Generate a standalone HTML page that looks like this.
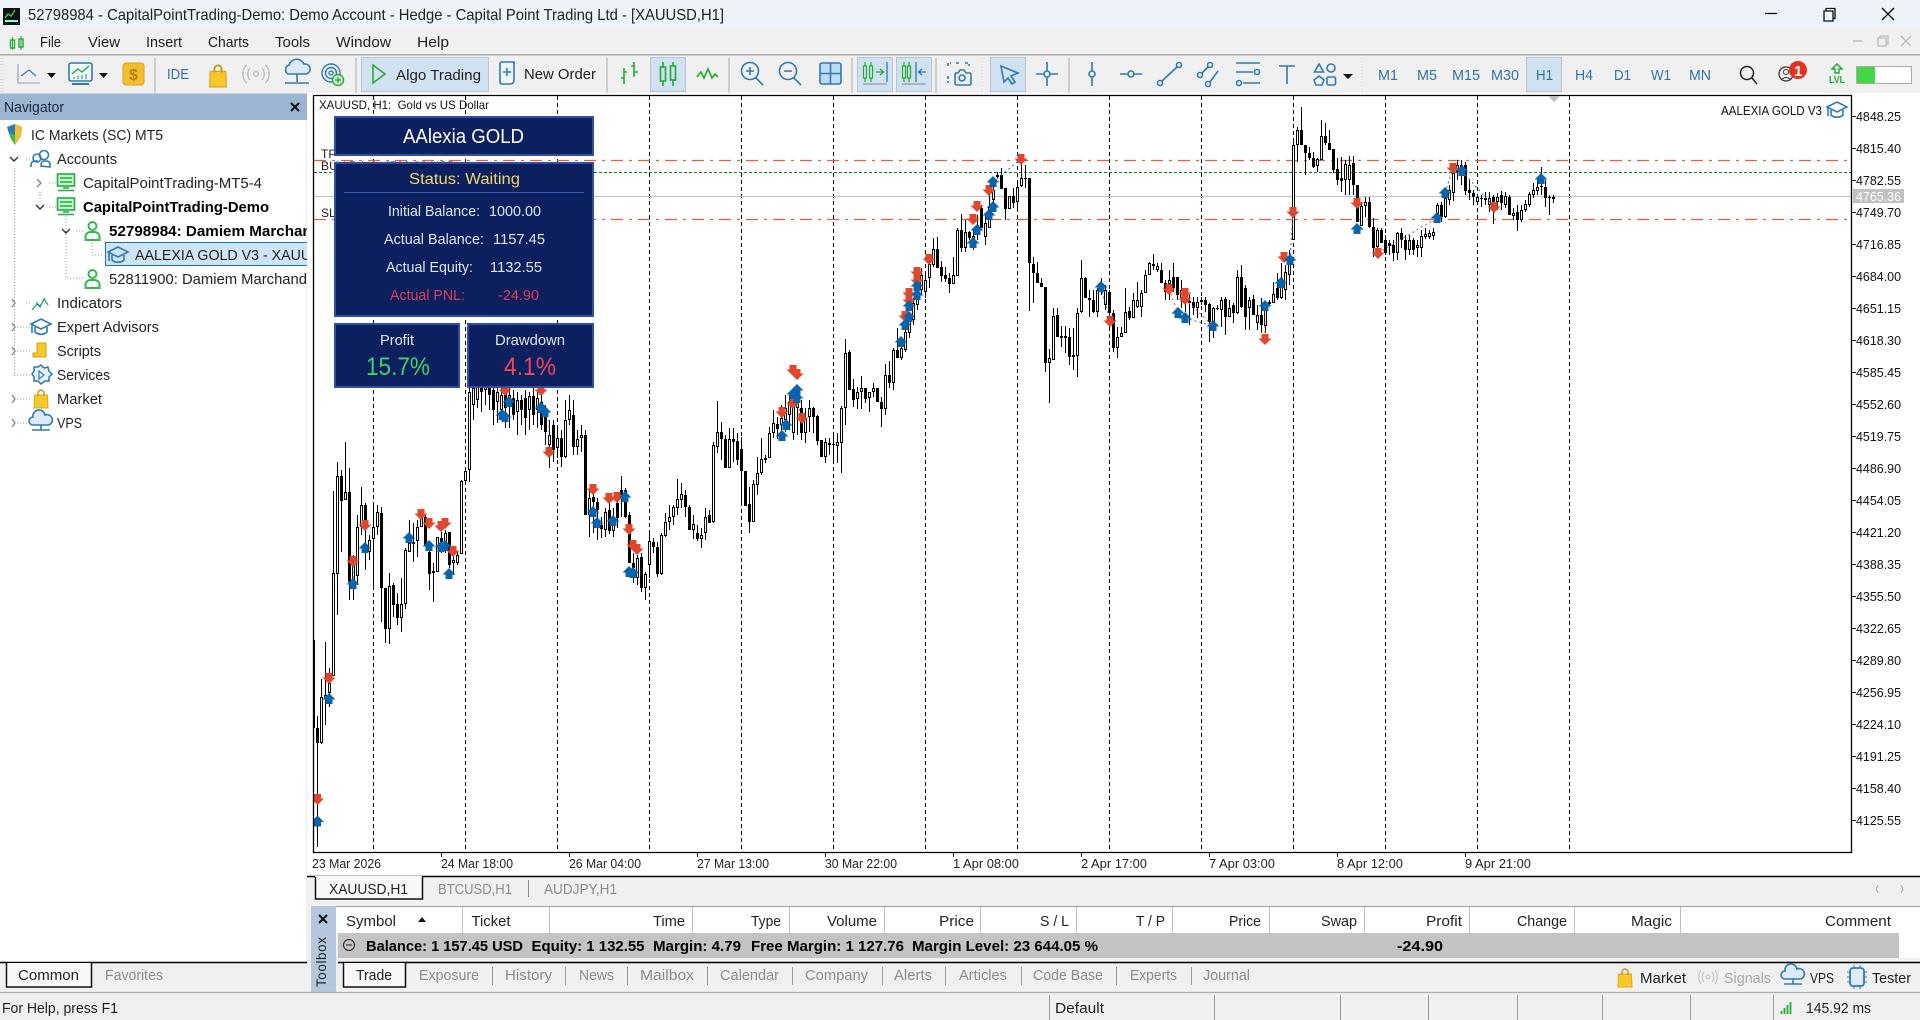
<!DOCTYPE html>
<html><head><meta charset="utf-8"><title>MT5</title>
<style>
html,body{margin:0;padding:0;width:1920px;height:1020px;overflow:hidden;background:#f0f0f0}
svg{display:block}
text{font-family:"Liberation Sans",sans-serif;font-size:15px;fill:#222}
.g{fill:#8c8c8c}.b{font-weight:bold;fill:#000}.a{font-size:13px;fill:#111}.d{font-size:12.5px;fill:#222}
.tf{fill:#2f74a8;font-size:15px}.h{fill:#222}
.w{fill:#dfe6f2;font-size:14.5px}
.ic{fill:none;stroke:#2f7bb0;stroke-width:1.6}.gr{fill:none;stroke:#22aa33;stroke-width:1.6}
</style></head><body>
<svg xmlns="http://www.w3.org/2000/svg" width="1920" height="1020" viewBox="0 0 1920 1020">
<defs>
<clipPath id="cc"><rect x="314" y="96" width="1537" height="756"/></clipPath>
<clipPath id="nv"><rect x="0" y="120" width="307" height="840"/></clipPath>
<g id="hat" class="ic"><path d="M-10-3 0-8 10-3 0 2Z"/><path d="M-6 0v5c3 3 9 3 12 0v-5M-9-2v8"/></g>
<g id="per" fill="none" stroke="#2dbb4d" stroke-width="2"><circle cx="0" cy="-5" r="4"/><path d="M-7 9v-3a5 5 0 0 1 5-5h4a5 5 0 0 1 5 5v3z"/></g>
<g id="srv"><rect x="-8.500" y="-9" width="17" height="12" fill="#c9f0cf" stroke="#1fae3f" stroke-width="1.600"/><path d="M-6-5h12M-6-1h12M-3 5h6M-8 7.500h16" stroke="#1fae3f" stroke-width="1.600" fill="none"/></g>
<g id="bag"><path d="M-6.500-4h13l.5 13h-14z" fill="#f7c828" stroke="#dba81c"/><path d="M-3-3v-3a3 3 0 0 1 6 0v3" fill="none" stroke="#c6951a" stroke-width="1.500"/></g>
<g id="cld" class="ic"><path d="M-8 2a4 4 0 0 1 0-8a6 6 0 0 1 12-2a5 5 0 0 1 4 10z" fill="#dcebf7"/><path d="M0 2v5M-9 7h18"/></g>
</defs>

<!-- backgrounds -->
<rect width="1920" height="1020" fill="#f0f0f0"/>
<rect width="1920" height="28" fill="#edf3f8"/>
<rect x="0" y="54" width="1920" height="1.5" fill="#a8a8a8"/>
<rect x="0" y="120" width="306" height="842" fill="#fff"/>
<rect x="0" y="93.5" width="307" height="26.5" fill="#9bb5d3"/>
<rect x="307" y="93" width="1613" height="783" fill="#fff"/>

<!-- title bar -->
<rect x="3" y="8" width="17" height="17" fill="#111"/><path d="M5 18l3-4 3 2 4-6" stroke="#3fbf4f" stroke-width="1.500" fill="none"/><rect x="5" y="20" width="13" height="2" fill="#8fd"/>
<text x="28" y="20" textLength="696" lengthAdjust="spacingAndGlyphs" style="font-size:16px">52798984 - CapitalPointTrading-Demo: Demo Account - Hedge - Capital Point Trading Ltd - [XAUUSD,H1]</text>
<path d="M1765 13.500h12" stroke="#111" stroke-width="1.300"/>
<path d="M1824 11h9v10h-9zM1826 11v-2.500h9v10h-2" fill="none" stroke="#111" stroke-width="1.300"/>
<path d="M1882 8l12 12M1894 8l-12 12" stroke="#111" stroke-width="1.300"/>

<!-- menu -->
<path d="M12.500 37v13M21 36v14" stroke="#22aa33"/><rect x="10.500" y="40" width="4" height="8" fill="none" stroke="#22aa33" stroke-width="1.400"/><rect x="19" y="39" width="4" height="8" fill="none" stroke="#22aa33" stroke-width="1.400"/>
<text x="40" y="47" textLength="21" lengthAdjust="spacingAndGlyphs">File</text>
<text x="88" y="47" textLength="32" lengthAdjust="spacingAndGlyphs">View</text>
<text x="146" y="47" textLength="36" lengthAdjust="spacingAndGlyphs">Insert</text>
<text x="208" y="47" textLength="41" lengthAdjust="spacingAndGlyphs">Charts</text>
<text x="275" y="47" textLength="35" lengthAdjust="spacingAndGlyphs">Tools</text>
<text x="336" y="47" textLength="55" lengthAdjust="spacingAndGlyphs">Window</text>
<text x="417" y="47" textLength="32" lengthAdjust="spacingAndGlyphs">Help</text>
<path d="M1853 41h9" stroke="#bbb" stroke-width="1.500"/><path d="M1878 38h8v8h-8zM1880 38v-2h8v8h-2" stroke="#bbb" fill="none" stroke-width="1.300"/><path d="M1901 36l10 10M1911 36l-10 10" stroke="#bbb" stroke-width="1.300"/>

<!-- toolbar -->
<path d="M3 58v34M1 58v34" stroke="#ccc" stroke-dasharray="1 2"/>
<path d="M18 64v19h22" stroke="#aab" fill="none" stroke-width="1.300"/><path d="M21 76l8-6 7 6" stroke="#3a86c0" fill="none" stroke-width="1.400"/>
<path d="M47 73h9l-4.500 5z" fill="#111"/>
<rect x="69" y="63" width="23" height="18" rx="2" fill="#eef6fb" stroke="#2f7bb0" stroke-width="1.600"/><path d="M72 74l6-5 4 3 7-6" stroke="#22aa33" fill="none" stroke-width="1.300"/><path d="M74 77v2M78 76v3M82 75v4M86 74v5" stroke="#2f7bb0"/><path d="M72 84h17" stroke="#2f7bb0" stroke-width="2"/>
<path d="M99 73h9l-4.500 5z" fill="#111"/>
<rect x="123" y="63" width="21" height="22" rx="3" fill="#f3bd2f" stroke="#dca41c"/><text x="129" y="80" style="font-size:16px;fill:#b57f10;font-weight:bold">$</text>
<path d="M155 58v35" stroke="#aaa"/>
<text x="167" y="79" textLength="22" lengthAdjust="spacingAndGlyphs" style="fill:#2f6fa8;font-size:15px">IDE</text>
<use href="#bag" x="217.500" y="76" transform="translate(-43 -15) scale(1.200)"/>
<g fill="none" stroke="#bbb" stroke-width="1.300"><circle cx="256" cy="74" r="2.500"/><path d="M250 68a9 9 0 0 0 0 12M262 68a9 9 0 0 1 0 12M246.500 65a13 13 0 0 0 0 18M265.500 65a13 13 0 0 1 0 18"/></g>
<path d="M288 74a5 5 0 0 1 1-9a8 8 0 0 1 15-1a5 5 0 0 1 2 10z" fill="#dcebf7" stroke="#2f7bb0" stroke-width="1.600"/><path d="M297 74v8M285 83h24" stroke="#2f7bb0" stroke-width="1.600"/>
<g fill="none" stroke="#2f7bb0" stroke-width="1.400"><circle cx="331" cy="73" r="9"/><circle cx="331" cy="73" r="5.500"/><circle cx="331" cy="73" r="2"/></g><circle cx="338" cy="80" r="5.500" fill="#d8f3dc" stroke="#22aa33" stroke-width="1.400"/><path d="M335 80h6M338 77v6" stroke="#22aa33" stroke-width="1.400"/>
<path d="M356 58v35" stroke="#aaa"/>
<rect x="361.500" y="57.500" width="127" height="34" fill="#d0e1f1" stroke="#b8c6d4"/>
<path d="M373 65l12 9-12 9z" fill="none" stroke="#22aa33" stroke-width="1.500"/>
<text x="396" y="80" textLength="85" lengthAdjust="spacingAndGlyphs">Algo Trading</text>
<path d="M500 64q0-2 2-2h12v18q0 4-4 4h-8q-2 0-2-2z" fill="#eef6fb" stroke="#2f7bb0" stroke-width="1.600"/><path d="M503 72h8M507 68v8" stroke="#2f7bb0" stroke-width="1.500"/>
<text x="524" y="79" textLength="72" lengthAdjust="spacingAndGlyphs">New Order</text>
<path d="M607 58v35" stroke="#aaa"/>
<path d="M624 68v16M621 78h3M624 72h3M634 62v15M631 66h3M634 72h4" stroke="#22aa33" stroke-width="1.600" fill="none"/>
<rect x="650.500" y="57.500" width="35" height="34" fill="#d0e1f1" stroke="#b8c6d4"/>
<g class="gr"><path d="M663 62v24M673 62v24"/><rect x="660.500" y="67" width="5" height="14" fill="#d0e1f1"/><rect x="670.500" y="66" width="5" height="14" fill="#d0e1f1"/></g>
<path d="M697 77l4-5 3 6 4-9 4 9 3-4 3 3" class="gr"/>
<path d="M729 58v35" stroke="#aaa"/>
<g class="ic"><circle cx="750" cy="71" r="8.500"/><path d="M756 78l7 7M746 71h8M750 67v8"/><circle cx="788" cy="71" r="8.500"/><path d="M794 78l7 7M784 71h8"/><rect x="820" y="63" width="21" height="21" rx="2" fill="#bcdcf3"/><path d="M830.500 63v21M820 73.500h21"/></g>
<path d="M852 58v35" stroke="#aaa"/>
<rect x="857.500" y="57.500" width="35" height="34" fill="#d0e1f1" stroke="#b8c6d4"/><rect x="896.500" y="57.500" width="35" height="34" fill="#d0e1f1" stroke="#b8c6d4"/>
<g fill="none" stroke="#22aa33" stroke-width="1.200"><path d="M865 62v20M871 62v20"/><rect x="863.500" y="66" width="3" height="12" fill="#d0e1f1"/><rect x="869.500" y="66" width="3" height="12" fill="#d0e1f1"/><path d="M876 72h7M880 69l3.500 3-3.500 3"/><path d="M904 62v20M909 62v20"/><rect x="902.500" y="66" width="3" height="12" fill="#d0e1f1"/><rect x="907.500" y="66" width="3" height="12" fill="#d0e1f1"/></g>
<path d="M887 62v20M916 62v20M926 72h-7M922 69l-3.500 3 3.500 3" fill="none" stroke="#2f7bb0" stroke-width="1.300"/>
<path d="M863 84h24M902 84h24" stroke="#999" stroke-width="1.200"/>
<path d="M936 58v35" stroke="#aaa"/>
<path d="M948 76v7M948 66v-3h3M956 63h4M965 63h4v3" class="ic" stroke-dasharray="3 2"/>
<path d="M955 73h3l2-3h4l2 3h3q2 0 2 2v8q0 2-2 2h-12q-2 0-2-2v-8q0-2 2-2z" class="ic"/><circle cx="962" cy="78" r="3" class="ic"/>
<path d="M982 58v35" stroke="#ccc" stroke-dasharray="1 2"/>
<rect x="990.500" y="57.500" width="35" height="34" fill="#d0e1f1" stroke="#b8c6d4"/>
<path d="M1001 66l17 7-7 3 4 6-3 2-4-6-4 4z" class="ic"/>
<g class="ic"><circle cx="1047" cy="74" r="3"/><path d="M1047 62v9M1047 77v9M1036 74h8M1050 74h8"/></g>
<path d="M1069 58v35" stroke="#aaa"/>
<g class="ic"><circle cx="1092" cy="74" r="3"/><path d="M1092 62v9M1092 77v9"/><circle cx="1131" cy="74" r="3"/><path d="M1120 74h8M1134 74h8"/><circle cx="1160" cy="83" r="2.500"/><circle cx="1179" cy="65" r="2.500"/><path d="M1162 81l15-14"/><circle cx="1200" cy="75" r="2.500"/><circle cx="1210" cy="65" r="2.500"/><circle cx="1208" cy="84" r="2.500"/><path d="M1202 73l6-6M1210 82l8-11"/><path d="M1236 63h24M1236 72h17M1243 83h17"/><circle cx="1257" cy="72" r="2.500"/><circle cx="1239" cy="83" r="2.500"/><path d="M1279 66h16M1287 66v18"/>
<path d="M1319 64l4.500 8h-9z"/><circle cx="1331" cy="68" r="4"/><path d="M1319 76l5 4-2 5h-6l-2-5z"/><rect x="1327" y="77" width="8.500" height="8" rx="1.500"/></g>
<path d="M1343 74h10l-5 5z" fill="#111"/>
<path d="M1362 58v35" stroke="#ccc" stroke-dasharray="1 2"/>
<text class="tf" x="1378" y="80" textLength="20" lengthAdjust="spacingAndGlyphs">M1</text>
<text class="tf" x="1417" y="80" textLength="20" lengthAdjust="spacingAndGlyphs">M5</text>
<text class="tf" x="1452" y="80" textLength="28" lengthAdjust="spacingAndGlyphs">M15</text>
<text class="tf" x="1491" y="80" textLength="28" lengthAdjust="spacingAndGlyphs">M30</text>
<rect x="1526.500" y="57.500" width="35" height="34" fill="#d0e1f1" stroke="#b8c6d4"/>
<text class="tf" x="1536" y="80" textLength="17" lengthAdjust="spacingAndGlyphs">H1</text>
<text class="tf" x="1575" y="80" textLength="18" lengthAdjust="spacingAndGlyphs">H4</text>
<text class="tf" x="1614" y="80" textLength="17" lengthAdjust="spacingAndGlyphs">D1</text>
<text class="tf" x="1651" y="80" textLength="20" lengthAdjust="spacingAndGlyphs">W1</text>
<text class="tf" x="1689" y="80" textLength="22" lengthAdjust="spacingAndGlyphs">MN</text>
<circle cx="1747" cy="73" r="6.500" fill="none" stroke="#222" stroke-width="1.500"/><path d="M1752 78l5 6" stroke="#222" stroke-width="1.500"/>
<circle cx="1786" cy="74" r="7" fill="none" stroke="#333" stroke-width="1.300"/><circle cx="1786" cy="72" r="2.500" fill="none" stroke="#333"/><path d="M1781 80q5-5 10 0" fill="none" stroke="#333"/>
<circle cx="1798" cy="70" r="9" fill="#e2311e"/><text x="1794" y="76" style="font-size:15px;fill:#fff;font-weight:bold">1</text>
<path d="M1837 64l5 5h-3v4h-4v-4h-3z" fill="none" stroke="#22aa33" stroke-width="1.400"/><text x="1829" y="83" textLength="16" lengthAdjust="spacingAndGlyphs" style="font-size:10px;fill:#22aa33;font-weight:bold">LVL</text>
<rect x="1856.500" y="66.500" width="55" height="17" fill="#fff" stroke="#aaa"/><rect x="1857" y="67" width="18" height="16" fill="#43d843"/>

<!-- navigator header -->
<text x="4" y="112" textLength="60" lengthAdjust="spacingAndGlyphs" style="fill:#1c2a3a">Navigator</text>
<path d="M291 103l8 8M299 103l-8 8" stroke="#111" stroke-width="2"/>

<!-- nav tree -->
<g stroke="#999" fill="none" stroke-dasharray="1 2">
<path d="M14.500 168v208M26 159h4M40 192v10M26 303h4M14 327h16M14 351h16M14 375h16M14 399h16M14 423h16M49 183h7M49 207h7M66 216v62h17M76 231h7M92 240v15h12"/>
</g>
<g fill="none" stroke="#333" stroke-width="1.400">
<path d="M10 157l4 4 4-4"/><path d="M37 179l4 4-4 4" stroke="#888"/><path d="M36 205l4 4 4-4"/><path d="M62 229l4 4 4-4"/>
<path d="M12 299l3 4-3 4M12 323l3 4-3 4M12 347l3 4-3 4M12 395l3 4-3 4M12 419l3 4-3 4" stroke="#888"/>
</g>
<path d="M7 127l8-3 7 3-1 9-6 9-5-8z" fill="#2f7bb0"/><path d="M15 124l7 3-1 9-6 9z" fill="#f3bd2f"/><path d="M10 133l5 2v10l-5-8z" fill="#3dbb4d"/>
<text x="31" y="140" textLength="132" lengthAdjust="spacingAndGlyphs">IC Markets (SC) MT5</text>
<g class="ic"><circle cx="44" cy="155" r="4.500"/><circle cx="37" cy="158" r="4"/><path d="M31 167v-2q0-4 5-4h2M41 166q0-5 3-5h2q4 0 4 4v2z"/></g>
<text x="57" y="164" textLength="60" lengthAdjust="spacingAndGlyphs">Accounts</text>
<use href="#srv" x="66" y="183"/><text x="83" y="188" textLength="179" lengthAdjust="spacingAndGlyphs">CapitalPointTrading-MT5-4</text>
<use href="#srv" x="66" y="207"/><text x="83" y="212" class="b" textLength="186" lengthAdjust="spacingAndGlyphs">CapitalPointTrading-Demo</text>
<use href="#per" x="92.500" y="231"/>
<g clip-path="url(#nv)">
<text x="109" y="236" class="b" textLength="212" lengthAdjust="spacingAndGlyphs">52798984: Damiem Marchand</text>
<rect x="105.500" y="242.500" width="210" height="23" fill="#cfe4f7" stroke="#1a73c0"/>
<text x="135" y="260" textLength="218" lengthAdjust="spacingAndGlyphs">AALEXIA GOLD V3 - XAUUSD,H1</text>
<text x="109" y="284" textLength="198" lengthAdjust="spacingAndGlyphs">52811900: Damiem Marchand</text>
</g>
<use href="#hat" x="118" y="255"/>
<use href="#per" x="92.500" y="279"/>
<path d="M32 310l5-6 3 3 4-8 4 6" fill="none" stroke="#2a8fc0" stroke-width="1.300"/><path d="M36 302l4 4 5-8" fill="none" stroke="#22aa33"/>
<text x="57" y="308" textLength="65" lengthAdjust="spacingAndGlyphs">Indicators</text>
<use href="#hat" x="41" y="327"/><text x="57" y="332" textLength="102" lengthAdjust="spacingAndGlyphs">Expert Advisors</text>
<path d="M37 343h9v14h-13v-4h4z" fill="#f7c828" stroke="#d49f1a"/><text x="57" y="356" textLength="44" lengthAdjust="spacingAndGlyphs">Scripts</text>
<path d="M41 365l3 3 4-1 1 4 3 3-3 3 0 4-4 0-4 3-3-3-4 0 0-4-2-3 2-3 0-4 4 0z" fill="#e4f0fa" stroke="#2f7bb0" stroke-width="1.500"/><path d="M39 371l5 4-5 4z" fill="none" stroke="#2f7bb0" stroke-width="1.200"/>
<text x="57" y="380" textLength="53" lengthAdjust="spacingAndGlyphs">Services</text>
<use href="#bag" x="41" y="399"/><text x="57" y="404" textLength="45" lengthAdjust="spacingAndGlyphs">Market</text>
<use href="#cld" x="41" y="423"/><text x="57" y="428" textLength="25" lengthAdjust="spacingAndGlyphs">VPS</text>

<!-- chart frame + grid -->
<g stroke="#000" stroke-dasharray="4 3">
<path d="M373.500 96V852M465.500 96V852M557.500 96V852M649.500 96V852M741.500 96V852M833.500 96V852M925.500 96V852M1017.500 96V852M1109.500 96V852M1201.500 96V852M1293.500 96V852M1385.500 96V852M1477.500 96V852M1569.500 96V852"/>
</g>
<path d="M314 196.500H1851" stroke="#c4c4c4" stroke-width="1.200"/>
<path d="M314 160.500H1851M314 219.500H1851" stroke="#e0613a" stroke-width="1.200" stroke-dasharray="12 6 3 6"/>
<path d="M314 172.500H1851" stroke="#187d18" stroke-dasharray="3 2"/>
<g id="cand" clip-path="url(#cc)"></g>
<g fill="none" stroke-dasharray="2 3" stroke="#1c6fb5" clip-path="url(#cc)"><path d="M993 182L1021 159M1101 287L1110 321M1445 193L1453 168M1462 171L1494 207M1290 260L1293 212M1185 318L1213 326M797 399L801 418M549 452L549 420M353 561V584"/><path stroke="#d8553a" d="M1185 299L1213 326M1378 253L1437 218M1265 306V339M1169 289L1178 313"/></g>
<path d="M313.500 95V852.500H1851.500V95M313 95.500H1852" fill="none" stroke="#000" stroke-width="1.300"/>
<path d="M1548 96h12l-6 6z" fill="#bdbdbd"/>
<text x="1721" y="115" class="a" textLength="101" lengthAdjust="spacingAndGlyphs" style="font-size:12.500px">AALEXIA GOLD V3</text>
<use href="#hat" x="1837" y="110"/>
<text x="319" y="109" textLength="170" lengthAdjust="spacingAndGlyphs" style="font-size:12px;fill:#111;white-space:pre">XAUUSD, H1:  Gold vs US Dollar</text>
<text x="321" y="158" style="font-size:12px">TP</text>
<text x="321" y="170" textLength="135" lengthAdjust="spacingAndGlyphs" style="font-size:12px;fill:#222">BUY Price: 4782.36 USD</text>
<text x="321" y="217" style="font-size:12px">SL</text>

<!-- price axis -->
<path d="M1851 116.500h5M1851 148.500h5M1851 180.500h5M1851 212.500h5M1851 244.500h5M1851 276.500h5M1851 308.500h5M1851 340.500h5M1851 372.500h5M1851 404.500h5M1851 436.500h5M1851 468.500h5M1851 500.500h5M1851 532.500h5M1851 564.500h5M1851 596.500h5M1851 628.500h5M1851 660.500h5M1851 692.500h5M1851 724.500h5M1851 756.500h5M1851 788.500h5M1851 820.500h5" stroke="#222"/>
<g class="a">
<text class="a" x="1856" y="121" textLength="45" lengthAdjust="spacingAndGlyphs">4848.25</text>
<text class="a" x="1856" y="153" textLength="45" lengthAdjust="spacingAndGlyphs">4815.40</text>
<text class="a" x="1856" y="185" textLength="45" lengthAdjust="spacingAndGlyphs">4782.55</text>
<text class="a" x="1856" y="217" textLength="45" lengthAdjust="spacingAndGlyphs">4749.70</text>
<text class="a" x="1856" y="249" textLength="45" lengthAdjust="spacingAndGlyphs">4716.85</text>
<text class="a" x="1856" y="281" textLength="45" lengthAdjust="spacingAndGlyphs">4684.00</text>
<text class="a" x="1856" y="313" textLength="45" lengthAdjust="spacingAndGlyphs">4651.15</text>
<text class="a" x="1856" y="345" textLength="45" lengthAdjust="spacingAndGlyphs">4618.30</text>
<text class="a" x="1856" y="377" textLength="45" lengthAdjust="spacingAndGlyphs">4585.45</text>
<text class="a" x="1856" y="409" textLength="45" lengthAdjust="spacingAndGlyphs">4552.60</text>
<text class="a" x="1856" y="441" textLength="45" lengthAdjust="spacingAndGlyphs">4519.75</text>
<text class="a" x="1856" y="473" textLength="45" lengthAdjust="spacingAndGlyphs">4486.90</text>
<text class="a" x="1856" y="505" textLength="45" lengthAdjust="spacingAndGlyphs">4454.05</text>
<text class="a" x="1856" y="537" textLength="45" lengthAdjust="spacingAndGlyphs">4421.20</text>
<text class="a" x="1856" y="569" textLength="45" lengthAdjust="spacingAndGlyphs">4388.35</text>
<text class="a" x="1856" y="601" textLength="45" lengthAdjust="spacingAndGlyphs">4355.50</text>
<text class="a" x="1856" y="633" textLength="45" lengthAdjust="spacingAndGlyphs">4322.65</text>
<text class="a" x="1856" y="665" textLength="45" lengthAdjust="spacingAndGlyphs">4289.80</text>
<text class="a" x="1856" y="697" textLength="45" lengthAdjust="spacingAndGlyphs">4256.95</text>
<text class="a" x="1856" y="729" textLength="45" lengthAdjust="spacingAndGlyphs">4224.10</text>
<text class="a" x="1856" y="761" textLength="45" lengthAdjust="spacingAndGlyphs">4191.25</text>
<text class="a" x="1856" y="793" textLength="45" lengthAdjust="spacingAndGlyphs">4158.40</text>
<text class="a" x="1856" y="825" textLength="45" lengthAdjust="spacingAndGlyphs">4125.55</text>
</g>
<rect x="1853" y="189" width="51" height="14" fill="#c2c2c2"/><text x="1856" y="201" textLength="45" lengthAdjust="spacingAndGlyphs" style="font-size:13px;fill:#fff">4765.36</text>

<!-- date axis -->
<path d="M441.500 852v5M569.500 852v5M697.500 852v5M825.500 852v5M953.500 852v5M1081.500 852v5M1209.500 852v5M1337.500 852v5M1465.500 852v5" stroke="#222"/>
<text class="d" x="312" y="868" textLength="69" lengthAdjust="spacingAndGlyphs">23 Mar 2026</text>
<text class="d" x="441" y="868" textLength="72" lengthAdjust="spacingAndGlyphs">24 Mar 18:00</text>
<text class="d" x="569" y="868" textLength="72" lengthAdjust="spacingAndGlyphs">26 Mar 04:00</text>
<text class="d" x="697" y="868" textLength="72" lengthAdjust="spacingAndGlyphs">27 Mar 13:00</text>
<text class="d" x="825" y="868" textLength="72" lengthAdjust="spacingAndGlyphs">30 Mar 22:00</text>
<text class="d" x="953" y="868" textLength="66" lengthAdjust="spacingAndGlyphs">1 Apr 08:00</text>
<text class="d" x="1081" y="868" textLength="66" lengthAdjust="spacingAndGlyphs">2 Apr 17:00</text>
<text class="d" x="1209" y="868" textLength="66" lengthAdjust="spacingAndGlyphs">7 Apr 03:00</text>
<text class="d" x="1337" y="868" textLength="66" lengthAdjust="spacingAndGlyphs">8 Apr 12:00</text>
<text class="d" x="1465" y="868" textLength="66" lengthAdjust="spacingAndGlyphs">9 Apr 21:00</text>

<!-- EA panels -->
<g stroke="#2f4fa5" stroke-width="2" fill="#0c1f5e">
<rect x="335" y="117" width="258" height="38"/>
<rect x="335" y="163" width="258" height="153"/>
<rect x="335" y="324" width="124" height="63"/>
<rect x="468" y="324" width="125" height="63"/>
</g>
<text x="403" y="143" textLength="121" lengthAdjust="spacingAndGlyphs" style="font-size:20px;fill:#fff">AAlexia GOLD</text>
<text x="409" y="184" textLength="111" lengthAdjust="spacingAndGlyphs" style="font-size:16px;fill:#f1d668">Status: Waiting</text>
<path d="M344 192.500H584" stroke="#3a5ab0"/>
<text class="w" x="388" y="216" textLength="92" lengthAdjust="spacingAndGlyphs">Initial Balance:</text><text class="w" x="489" y="216" textLength="52" lengthAdjust="spacingAndGlyphs">1000.00</text>
<text class="w" x="384" y="244" textLength="100" lengthAdjust="spacingAndGlyphs">Actual Balance:</text><text class="w" x="493" y="244" textLength="52" lengthAdjust="spacingAndGlyphs">1157.45</text>
<text class="w" x="386" y="272" textLength="87" lengthAdjust="spacingAndGlyphs">Actual Equity:</text><text class="w" x="490" y="272" textLength="52" lengthAdjust="spacingAndGlyphs">1132.55</text>
<text x="390" y="300" textLength="75" lengthAdjust="spacingAndGlyphs" style="font-size:14.500px;fill:#dd3f55">Actual PNL:</text><text x="498" y="300" textLength="41" lengthAdjust="spacingAndGlyphs" style="font-size:14.500px;fill:#dd3f55">-24.90</text>
<text class="w" x="380" y="345" textLength="34" lengthAdjust="spacingAndGlyphs">Profit</text>
<text class="w" x="495" y="345" textLength="70" lengthAdjust="spacingAndGlyphs">Drawdown</text>
<text x="366" y="375" textLength="64" lengthAdjust="spacingAndGlyphs" style="font-size:25px;fill:#43d163">15.7%</text>
<text x="504" y="375" textLength="52" lengthAdjust="spacingAndGlyphs" style="font-size:25px;fill:#f0465a">4.1%</text>

<!-- chart tabs -->
<rect x="307" y="877" width="1613" height="30" fill="#f0f0f0"/>
<path d="M307 876.500H1920" stroke="#000" stroke-width="1.500"/>
<rect x="315" y="876" width="107" height="23" fill="#f8f8f8"/>
<path d="M315.500 877v22h107v-22" fill="none" stroke="#111" stroke-width="1.500"/>
<text x="329" y="894" textLength="79" lengthAdjust="spacingAndGlyphs">XAUUSD,H1</text>
<text class="g" x="438" y="894" textLength="74" lengthAdjust="spacingAndGlyphs">BTCUSD,H1</text>
<path d="M528.500 880v17" stroke="#888"/>
<text class="g" x="544" y="894" textLength="73" lengthAdjust="spacingAndGlyphs">AUDJPY,H1</text>
<path d="M1878 885l-2 4 2 4M1901 885l2 4-2 4" fill="none" stroke="#aaa"/>

<!-- toolbox -->
<rect x="311" y="906" width="25" height="86" fill="#b4c7dd"/>
<path d="M319 915l8 8M327 915l-8 8" stroke="#111" stroke-width="2"/>
<text transform="translate(326 987) rotate(-90)" x="0" y="0" textLength="50" lengthAdjust="spacing" style="font-size:13.500px;fill:#222">Toolbox</text>
<path d="M336 906.500H1920" stroke="#a0a0a0"/>
<rect x="336" y="907" width="1584" height="26" fill="#fff"/>
<path d="M462.500 907v26M549.500 907v26M692.500 907v26M789.500 907v26M884.500 907v26M980.500 907v26M1076.500 907v26M1172.500 907v26M1269.500 907v26M1364.500 907v26M1469.500 907v26M1574.500 907v26M1680.500 907v26" stroke="#bdbdbd"/>
<rect x="338" y="933" width="1561" height="25" fill="#c3c3c3"/>
<rect x="1899" y="933" width="21" height="25" fill="#fff"/>
<text x="346" y="926" textLength="50" lengthAdjust="spacingAndGlyphs">Symbol</text><path d="M418 922h8l-4-5z" fill="#111"/>
<text x="471.500" y="926" textLength="39" lengthAdjust="spacingAndGlyphs">Ticket</text>
<g text-anchor="end">
<text x="685" y="926" text-anchor="end" textLength="32" lengthAdjust="spacingAndGlyphs">Time</text>
<text x="781" y="926" text-anchor="end" textLength="30" lengthAdjust="spacingAndGlyphs">Type</text>
<text x="877" y="926" text-anchor="end" textLength="50" lengthAdjust="spacingAndGlyphs">Volume</text>
<text x="974" y="926" text-anchor="end" textLength="35" lengthAdjust="spacingAndGlyphs">Price</text>
<text x="1069" y="926" text-anchor="end" textLength="29" lengthAdjust="spacingAndGlyphs">S / L</text>
<text x="1165" y="926" text-anchor="end" textLength="29" lengthAdjust="spacingAndGlyphs">T / P</text>
<text x="1261" y="926" text-anchor="end" textLength="32" lengthAdjust="spacingAndGlyphs">Price</text>
<text x="1357" y="926" text-anchor="end" textLength="36" lengthAdjust="spacingAndGlyphs">Swap</text>
<text x="1462" y="926" text-anchor="end" textLength="36" lengthAdjust="spacingAndGlyphs">Profit</text>
<text x="1567" y="926" text-anchor="end" textLength="50" lengthAdjust="spacingAndGlyphs">Change</text>
<text x="1672" y="926" text-anchor="end" textLength="41" lengthAdjust="spacingAndGlyphs">Magic</text>
<text x="1891" y="926" text-anchor="end" textLength="66" lengthAdjust="spacingAndGlyphs">Comment</text>
</g>
<circle cx="349" cy="945" r="5.500" fill="none" stroke="#222"/><path d="M346 945h6" stroke="#222"/>
<text class="b" x="366" y="951" textLength="157" lengthAdjust="spacingAndGlyphs">Balance: 1 157.45 USD</text>
<text class="b" x="531.500" y="951" textLength="113" lengthAdjust="spacingAndGlyphs">Equity: 1 132.55</text>
<text class="b" x="653" y="951" textLength="88" lengthAdjust="spacingAndGlyphs">Margin: 4.79</text>
<text class="b" x="751" y="951" textLength="153" lengthAdjust="spacingAndGlyphs">Free Margin: 1 127.76</text>
<text class="b" x="912" y="951" textLength="186" lengthAdjust="spacingAndGlyphs">Margin Level: 23 644.05 %</text>
<text class="b" x="1397" y="951" textLength="46" lengthAdjust="spacingAndGlyphs">-24.90</text>

<!-- bottom tabs -->
<path d="M0 962.500H307M338 962.500H1920" stroke="#000" stroke-width="1.500"/>
<rect x="6" y="963" width="86" height="24" fill="#f8f8f8"/><path d="M6.500 963v24h85v-24" fill="none" stroke="#111" stroke-width="1.500"/>
<text x="18" y="980" textLength="61" lengthAdjust="spacingAndGlyphs">Common</text>
<text class="g" x="105" y="980" textLength="58" lengthAdjust="spacingAndGlyphs">Favorites</text>
<rect x="343" y="963" width="63" height="24" fill="#f8f8f8"/><path d="M343.500 963v24h62v-24" fill="none" stroke="#111" stroke-width="1.500"/>
<text x="356" y="980" textLength="36" lengthAdjust="spacingAndGlyphs">Trade</text>
<text class="g" x="419" y="980" textLength="60" lengthAdjust="spacingAndGlyphs">Exposure</text>
<text class="g" x="505" y="980" textLength="47" lengthAdjust="spacingAndGlyphs">History</text>
<text class="g" x="579" y="980" textLength="35" lengthAdjust="spacingAndGlyphs">News</text>
<text class="g" x="640" y="980" textLength="54" lengthAdjust="spacingAndGlyphs">Mailbox</text>
<text class="g" x="720" y="980" textLength="59" lengthAdjust="spacingAndGlyphs">Calendar</text>
<text class="g" x="805" y="980" textLength="63" lengthAdjust="spacingAndGlyphs">Company</text>
<text class="g" x="894" y="980" textLength="38" lengthAdjust="spacingAndGlyphs">Alerts</text>
<text class="g" x="959" y="980" textLength="48" lengthAdjust="spacingAndGlyphs">Articles</text>
<text class="g" x="1033" y="980" textLength="70" lengthAdjust="spacingAndGlyphs">Code Base</text>
<text class="g" x="1130" y="980" textLength="47" lengthAdjust="spacingAndGlyphs">Experts</text>
<text class="g" x="1203" y="980" textLength="47" lengthAdjust="spacingAndGlyphs">Journal</text>
<path d="M492.500 967v18M565.500 967v18M627.500 967v18M707.500 967v18M792.500 967v18M882.500 967v18M945.500 967v18M1021.500 967v18M1116.500 967v18M1191.500 967v18" stroke="#999"/>
<use href="#bag" x="1625" y="978"/>
<text x="1640" y="983" textLength="46" lengthAdjust="spacingAndGlyphs">Market</text>
<g fill="none" stroke="#c4c4c4" stroke-width="1.200"><circle cx="1708" cy="977" r="1.800"/><path d="M1704 972a8 8 0 0 0 0 10M1712 972a8 8 0 0 1 0 10M1701 970a12 12 0 0 0 0 14M1715 970a12 12 0 0 1 0 14"/></g>
<text x="1724" y="983" textLength="47" lengthAdjust="spacingAndGlyphs" style="fill:#aaa">Signals</text>
<use href="#cld" x="1793" y="977"/><text x="1810" y="983" textLength="24" lengthAdjust="spacingAndGlyphs">VPS</text>
<rect x="1850" y="968" width="14" height="18" rx="3" fill="#dcebf7" stroke="#2f7bb0" stroke-width="1.800"/><path d="M1847 972h3M1847 977h3M1847 982h3M1864 972h3M1864 977h3M1864 982h3M1854 965v3M1860 965v3M1854 986v3M1860 986v3" stroke="#2f7bb0"/>
<text x="1872" y="983" textLength="39" lengthAdjust="spacingAndGlyphs">Tester</text>

<!-- status bar -->
<path d="M0 992.500H1920" stroke="#b0b0b0" stroke-width="1.200"/>
<text x="2" y="1013" textLength="116" lengthAdjust="spacingAndGlyphs">For Help, press F1</text>
<text x="1055" y="1013" textLength="49" lengthAdjust="spacingAndGlyphs">Default</text>
<path d="M1049.500 995v25M1214.500 995v25M1340.500 995v25M1428.500 995v25M1517.500 995v25M1602.500 995v25M1690.500 995v25M1773.500 995v25" stroke="#999"/>
<path d="M1781.500 1014v-3M1784.500 1014v-6M1787.500 1014v-9M1790.500 1014v-12" stroke="#22aa33" stroke-width="1.800"/>
<text x="1806" y="1013" textLength="65" lengthAdjust="spacingAndGlyphs">145.92 ms</text>
</svg>
<script>
var D=[-640,640,728,728,-716,728,743,847,679,697,743,744,642,695,698,725,668,683,693,707,491,573,676,676,462,476,574,615,-470,476,501,552,442,492,500,500,-468,492,582,600,
555,562,585,600,515,527,576,585,487,505,527,535,-503,505,520,570,535,540,552,560,505,527,539,590,505,512,527,535,-507,513,588,622,-588,588,629,643,573,586,629,644,
-583,585,605,617,-593,604,618,625,578,604,618,632,548,550,604,609,520,543,552,552,-523,542,544,562,520,527,541,557,510,518,527,527,-515,517,546,546,-547,552,574,590,
563,571,573,602,537,537,572,572,-532,538,542,553,530,533,548,553,-532,532,565,568,555,560,563,575,552,555,563,565,480,481,554,554,470,471,481,482,386,392,470,482,
386,388,405,420,380,386,400,408,-370,378,392,412,372,380,390,405,-375,380,395,410,-380,390,410,425,385,392,402,423,380,395,410,418,-385,392,408,428,388,395,405,428,
-390,398,415,420,392,400,412,435,-395,400,410,425,-390,398,418,435,392,396,410,430,-388,396,415,425,390,398,410,428,-395,402,425,430,-405,412,432,445,420,435,445,468,
-420,425,450,462,428,438,448,458,-430,438,457,467,400,420,457,458,395,410,420,425,-400,415,447,455,430,439,447,455,425,435,438,452,-430,435,515,515,490,498,515,537,
-493,497,502,533,-498,502,510,540,-517,525,529,538,508,512,530,537,-502,510,531,534,508,525,531,537,-500,503,518,528,-476,490,495,517,-488,490,517,518,-512,515,563,563,
-553,563,568,583,555,558,578,585,-553,557,588,592,572,574,588,600,532,541,565,578,-538,542,547,553,-542,547,574,577,533,535,574,575,513,522,536,537,505,517,522,530,
505,507,517,525,479,499,508,515,483,494,500,508,-490,495,507,517,-505,507,530,530,515,524,530,539,-525,533,539,541,528,535,539,548,508,517,533,540,-510,515,523,523,
442,445,522,523,401,432,447,453,-422,432,439,460,-435,439,468,468,428,439,468,468,-428,439,442,462,-433,441,460,465,-437,449,471,505,-471,471,506,506,-487,504,522,533,
480,484,522,522,457,473,485,495,438,459,473,475,-455,458,460,463,427,433,458,458,410,423,433,438,-417,424,429,439,405,418,425,440,395,408,420,432,395,402,415,430,
400,406,433,440,385,392,408,435,-400,408,433,440,408,419,433,443,400,408,417,432,-407,408,417,433,-415,416,441,445,-440,440,457,457,438,442,457,463,-438,443,445,455,
-433,444,445,460,433,442,446,463,406,408,443,473,339,353,408,425,-350,352,390,390,-379,389,400,407,387,392,399,409,376,388,392,409,-388,388,399,403,392,392,398,412,
383,388,392,397,-388,388,402,402,-397,402,409,427,364,375,409,415,-361,375,383,388,348,350,383,390,-328,350,358,358,340,348,358,360,328,332,350,352,315,320,333,338,
298,303,320,325,280,285,305,310,268,275,290,295,272,280,292,298,257,264,278,288,238,249,265,267,-237,249,268,268,-261,267,276,282,-267,275,279,282,-273,278,284,293,
257,275,284,284,228,230,276,276,-214,230,248,252,220,232,248,252,-231,232,238,240,228,236,246,250,215,225,235,240,-205,208,228,228,215,223,237,245,195,207,228,228,
185,190,200,205,172,175,177,178,-168,175,189,189,-188,188,209,220,196,196,209,209,-188,196,203,208,182,187,202,212,163,178,186,187,165,178,179,188,-178,178,263,311,
-257,264,273,303,-262,273,283,283,-278,283,287,287,-287,287,363,372,349,358,363,403,308,316,360,360,-308,315,337,337,-326,336,338,347,326,336,338,353,-328,337,357,365,
-328,355,357,370,308,313,356,377,260,278,312,313,-277,278,298,298,290,298,300,317,-290,300,312,313,288,290,312,317,278,283,290,295,285,290,305,310,-290,292,313,327,
-310,313,348,352,327,337,348,358,327,333,337,337,288,312,333,333,-307,311,318,320,293,300,318,318,282,300,307,308,290,293,307,317,270,275,293,293,262,263,275,275,
-254,264,266,270,263,266,270,272,-263,270,283,283,-280,283,292,300,270,280,284,300,-263,277,288,292,-277,277,295,300,280,290,298,308,293,298,303,312,-295,301,303,325,
-297,302,308,315,297,302,308,318,297,300,302,305,-297,300,305,312,-303,304,322,342,307,308,328,338,305,308,309,310,297,300,310,327,-297,299,317,335,300,308,317,317,
-303,305,313,323,270,277,313,314,-265,277,307,308,-285,288,317,330,297,300,308,330,-295,299,315,315,305,315,323,330,-298,315,325,333,303,308,326,333,300,302,304,305,
282,294,303,303,-273,288,298,300,263,278,298,299,265,272,290,300,250,258,275,285,140,145,240,240,127,130,145,162,-107,130,145,145,-145,145,153,175,-147,153,158,160,
-152,158,167,168,158,159,166,172,120,136,160,160,-123,136,143,145,-130,143,150,150,-149,149,170,173,-158,169,180,185,-157,178,181,192,160,164,180,195,156,165,180,195,
-156,163,185,195,-185,185,222,222,202,206,226,226,197,202,206,217,-197,202,227,228,-218,227,248,257,228,230,247,250,-228,230,243,243,-235,240,253,255,-240,243,246,255,
-240,245,253,261,232,233,253,260,-228,233,240,248,-235,240,250,260,235,240,250,255,-238,240,250,255,240,245,248,257,230,236,248,257,228,234,237,239,230,233,237,239,
228,232,236,240,203,205,218,223,-202,205,217,222,190,198,217,218,185,190,200,205,167,173,193,201,160,165,172,180,-160,165,175,185,-162,165,191,195,-180,190,193,200,
-190,193,197,205,195,197,202,205,195,198,199,207,-192,198,200,205,192,198,205,212,-195,197,205,224,193,197,202,210,-191,195,203,210,192,196,205,208,-195,197,215,215,
208,213,216,220,-205,212,220,231,205,210,220,222,200,204,210,212,192,194,205,207,183,190,195,198,178,187,191,195,167,186,187,195,-180,187,198,207,-195,197,198,215,
195,197,199,203];
var R=[317.5,799,329,678,353,561,365,525,421,514,429,523,441,526,445,523,453,551,505,390,541,390,549,452,593,489,609,498,617,497,629,529,633,545,637,549,782,412,793,370,797,374,793,403,802,418,905,316,909,293,909,300,917,272,917,280,929,259,973,219,977,206,989,190,1021,159,1110,321,1169,289,1185,293,1185,299,1265,339,1284,257,1293,212,1357,203,1378,253,1453,168,1494,207];
var B=[317.5,821.5,329,699,353,584,365,548,409,538,429,546,441,547,445,546,449,574,509,402,502,415,505,417,541,408,545,412,593,512,597,523,613,521,625,497,629,572,633,573,782,436,786,425,797,390,797,398,793,394,901,342,905,325,909,317,909,306,917,295,917,286,973,243,977,230,989,215,993,207,993,182,1101,287,1178,313,1185,318,1213,326,1265,306,1281,283,1290,260,1357,229,1437,218,1445,193,1462,171,1541,179];
var k="",w="";
for(var i=0,j=0;j<D.length;i++,j+=4){
 var h=D[j],t=D[j+1],b=D[j+2],l=D[j+3],f=h<0;h=Math.abs(h);
 var X=313+4*i;
 k+="M"+X+" "+h+"h1V"+l+"h-1z";
 if(b-t<1)b=t+1;
 k+="M"+(X-1)+" "+t+"h3V"+b+"h-3z";
 if(!f&&b-t>2)w+="M"+X+" "+(t+1)+"h1V"+(b-1)+"h-1z";
}
var r="",u="";
for(i=0;i<R.length;i+=2){var x=R[i],y=R[i+1];r+="M"+x+" "+(y+6)+"l6.500-6.500h-3v-4.500h-7v4.500h-3z";}
for(i=0;i<B.length;i+=2){x=B[i];y=B[i+1];u+="M"+x+" "+(y-6)+"l6.500 6.500h-3v4.500h-7v-4.500h-3z";}
document.getElementById("cand").innerHTML='<path shape-rendering="crispEdges" fill="#000" d="'+k+'"/><path shape-rendering="crispEdges" fill="#fff" d="'+w+'"/><path fill="#e0472b" d="'+r+'"/><path fill="#0a64ad" d="'+u+'"/>';
</script>
</body></html>
